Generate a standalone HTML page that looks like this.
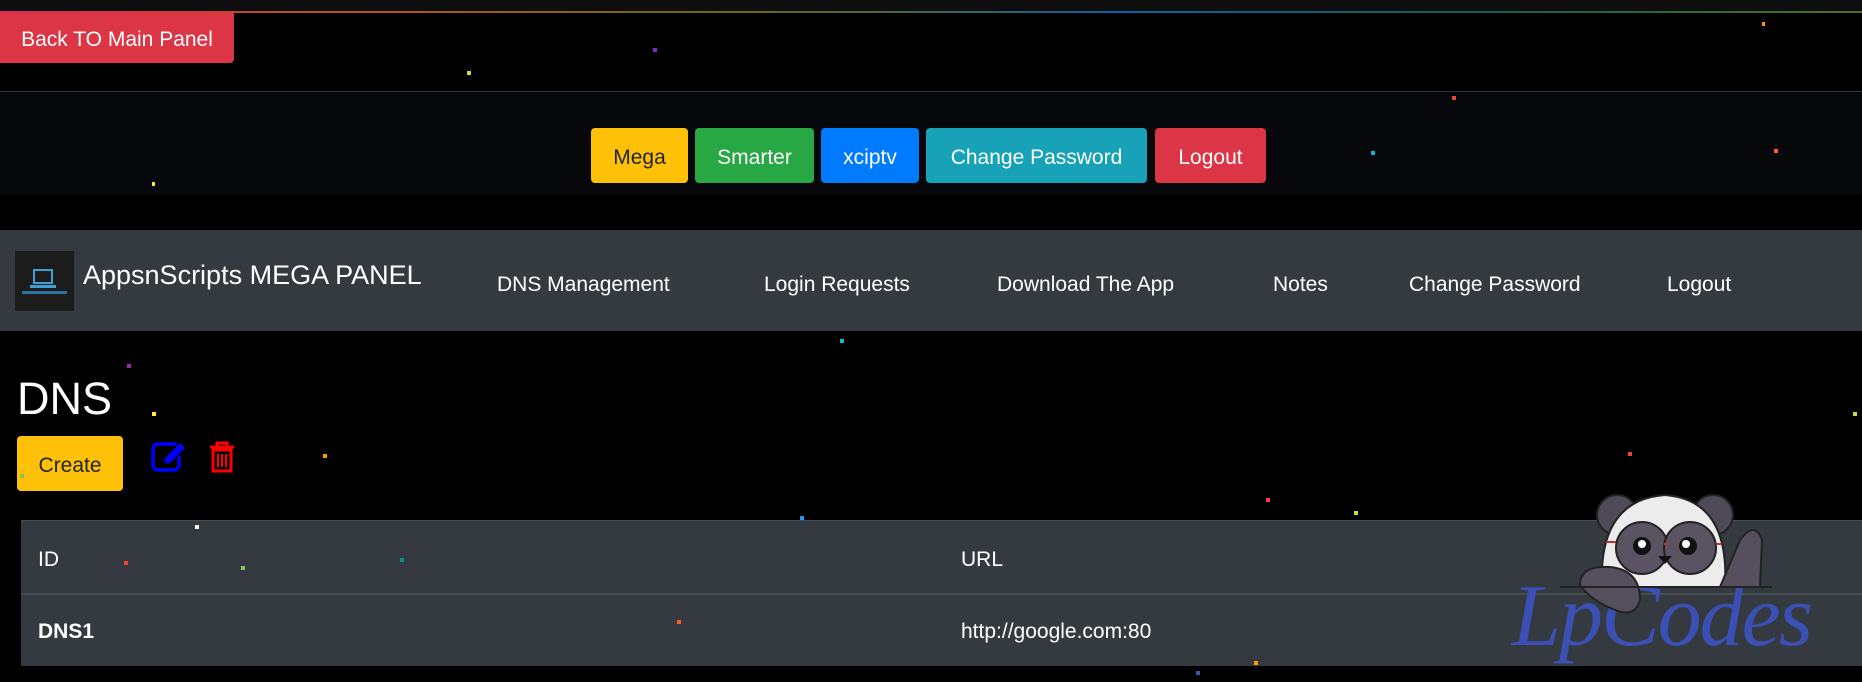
<!DOCTYPE html>
<html><head><meta charset="utf-8"><style>
*{margin:0;padding:0;box-sizing:border-box}
body{width:1862px;height:682px;background:#000;overflow:hidden;position:relative;font-family:"Segoe UI","Liberation Sans",sans-serif;color:#fff}
.a{position:absolute}
.btn{position:absolute;border-radius:4px;color:#fff;font-size:21px;display:flex;align-items:center;justify-content:center;padding-top:4px}
.nav{position:absolute;top:230px;left:0;width:1862px;height:101px;background:#343a40}
.nl{position:absolute;top:273px;font-size:21px;color:#fff}
.s{position:absolute;width:4px;height:4px}
</style></head><body>
<div class="a" style="left:0;top:0;width:1862px;height:11px;background:#0e0e0e"></div>
<div class="a" style="left:0;top:11px;width:1862px;height:2px;background:linear-gradient(90deg,#e0245e,#b05a10,#6a6a10,#1060a0,#106050,#507020)"></div>
<div class="btn" style="left:0;top:13px;width:234px;height:50px;background:#dc3545;border-radius:0 0 4px 0;font-size:21px">Back TO Main Panel</div>
<div class="a" style="left:0;top:91px;width:1862px;height:1px;background:#2c3642"></div>
<div class="a" style="left:0;top:92px;width:1862px;height:103px;background:#07080b"></div>
<div class="btn" style="left:591px;top:128px;width:97px;height:55px;background:#ffc107;color:#212529">Mega</div>
<div class="btn" style="left:695px;top:128px;width:119px;height:55px;background:#28a745">Smarter</div>
<div class="btn" style="left:821px;top:128px;width:98px;height:55px;background:#007bff">xciptv</div>
<div class="btn" style="left:926px;top:128px;width:221px;height:55px;background:#17a2b8">Change Password</div>
<div class="btn" style="left:1155px;top:128px;width:111px;height:55px;background:#dc3545">Logout</div>
<div class="nav"></div>
<div class="a" style="left:15px;top:251px;width:59px;height:60px;background:#1c1c1c">
<svg width="59" height="60"><rect x="19" y="19" width="18" height="13" fill="none" stroke="#3fa0d8" stroke-width="2"/><rect x="15" y="34" width="26" height="3" fill="#3fa0d8"/><rect x="7" y="40" width="45" height="3" fill="#2a70a0"/></svg></div>
<div class="a" style="left:83px;top:260px;font-size:27px">AppsnScripts MEGA PANEL</div>
<div class="nl" style="left:497px">DNS Management</div>
<div class="nl" style="left:764px">Login Requests</div>
<div class="nl" style="left:997px">Download The App</div>
<div class="nl" style="left:1273px">Notes</div>
<div class="nl" style="left:1409px">Change Password</div>
<div class="nl" style="left:1667px">Logout</div>
<div class="a" style="left:17px;top:373px;font-size:45px">DNS</div>
<div class="btn" style="left:17px;top:436px;width:106px;height:55px;background:#ffc107;color:#212529">Create</div>
<svg class="a" style="left:150px;top:440px" width="42" height="34"><rect x="3" y="4" width="26" height="26" rx="5" fill="none" stroke="#0000ff" stroke-width="3.5"/><path d="M14 24 L14 18 L30 2 L36 8 L20 24 Z" fill="#0000ff" stroke="#000" stroke-width="1.5"/></svg>
<svg class="a" style="left:206px;top:441px" width="32" height="34"><path d="M4 6 H28 M11 6 V2 H21 V6" stroke="#ff0000" stroke-width="3" fill="none"/><path d="M7 9 H25 V30 H7 Z" stroke="#ff0000" stroke-width="3" fill="none"/><path d="M12 13V26M16 13V26M20 13V26" stroke="#ff0000" stroke-width="2"/></svg>
<div class="a" style="left:21px;top:521px;width:1841px;height:145px;background:#343a40"></div>
<div class="a" style="left:21px;top:593px;width:1841px;height:2px;background:#454d55"></div>
<div class="a" style="left:21px;top:520px;width:1841px;height:1px;background:#454d55"></div>
<div class="a" style="left:38px;top:548px;font-size:21px">ID</div>
<div class="a" style="left:961px;top:548px;font-size:21px">URL</div>
<div class="a" style="left:38px;top:620px;font-size:21px;font-weight:bold">DNS1</div>
<div class="a" style="left:961px;top:620px;font-size:21px">http://google.com:80</div>
<div class="a" style="left:1512px;top:566px;font-family:'Liberation Serif',serif;font-style:italic;font-size:88px;color:#3a50b4;letter-spacing:-2px">LpCodes</div>
<svg class="a" style="left:1560px;top:470px" width="300" height="160">
<circle cx="57" cy="45" r="20" fill="#4e4a58" stroke="#222" stroke-width="2"/><circle cx="153" cy="45" r="20" fill="#4e4a58" stroke="#222" stroke-width="2"/>
<path d="M42 117 Q38 30 105 25 Q170 30 165 117 Z" fill="#ececec" stroke="#222" stroke-width="2"/>
<circle cx="82" cy="78" r="26" fill="#5a5462" stroke="#222" stroke-width="2"/><circle cx="130" cy="78" r="26" fill="#5a5462" stroke="#222" stroke-width="2"/>
<path d="M46 72 H56 M108 74 H104 M156 74 H162" stroke="#c03030" stroke-width="2"/>
<circle cx="82" cy="76" r="9" fill="#111"/><circle cx="128" cy="76" r="9" fill="#111"/><circle cx="82" cy="74" r="4" fill="#fff"/><circle cx="126" cy="74" r="4" fill="#fff"/>
<path d="M98 86 H112 L105 94Z" fill="#111"/>
<path d="M160 117 L180 70 Q195 50 202 70 L200 117 Z" fill="#56505e" stroke="#222" stroke-width="2"/>
<path d="M20 115 Q20 95 50 97 Q80 100 80 130 Q75 148 55 140 Q30 130 20 115Z" fill="#56505e" stroke="#222" stroke-width="2"/>
<path d="M0 117 H212" stroke="#222" stroke-width="2"/>
</svg>
<div class="s" style="left:653px;top:48px;background:#7b2fbe"></div>
<div class="s" style="left:467px;top:71px;background:#cddc39"></div>
<div class="s" style="left:152px;top:182px;background:#ffeb3b;width:3px"></div>
<div class="s" style="left:1371px;top:151px;background:#00bcd4"></div>
<div class="s" style="left:1452px;top:96px;background:#f44336"></div>
<div class="s" style="left:1774px;top:149px;background:#ff5722"></div>
<div class="s" style="left:1762px;top:22px;background:#ff9800;width:3px"></div>
<div class="s" style="left:840px;top:339px;background:#00bcd4"></div>
<div class="s" style="left:127px;top:364px;background:#9c27b0"></div>
<div class="s" style="left:152px;top:412px;background:#ffeb3b"></div>
<div class="s" style="left:323px;top:454px;background:#ff9800"></div>
<div class="s" style="left:20px;top:474px;background:#8bc34a"></div>
<div class="s" style="left:800px;top:516px;background:#2196f3"></div>
<div class="s" style="left:195px;top:525px;background:#fff"></div>
<div class="s" style="left:124px;top:561px;background:#f44336"></div>
<div class="s" style="left:241px;top:566px;background:#8bc34a"></div>
<div class="s" style="left:400px;top:558px;background:#009688"></div>
<div class="s" style="left:677px;top:620px;background:#ff5722"></div>
<div class="s" style="left:1628px;top:452px;background:#f44336"></div>
<div class="s" style="left:1354px;top:511px;background:#cddc39"></div>
<div class="s" style="left:1853px;top:412px;background:#cddc39"></div>
<div class="s" style="left:1266px;top:498px;background:#f44336"></div>
<div class="s" style="left:1254px;top:661px;background:#ff9800"></div>
<div class="s" style="left:1196px;top:671px;background:#3f51b5"></div>
</body></html>
